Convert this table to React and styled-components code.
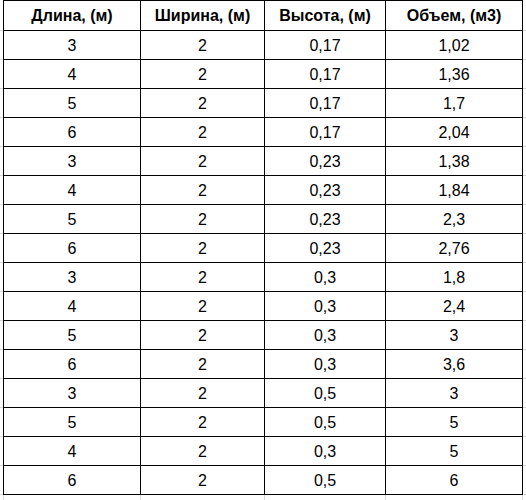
import React from 'react'
import styled, { createGlobalStyle } from 'styled-components'

const GlobalStyle = createGlobalStyle`
  html, body {
    margin: 0;
    padding: 0;
    background: #ffffff;
  }
  body {
    font-family: "Liberation Sans", Arial, sans-serif;
    color: #000000;
  }
`

const COLS = [138, 124, 121, 137]

const Sheet = styled.div`
  width: 526px;
  height: 500px;
  overflow: hidden;
  display: grid;
  grid-template-columns: 3px auto 1fr;
  grid-template-rows: auto 1fr;
`

const Gutter = styled.div`
  display: flex;
  flex-direction: column;
`

const GutterCell = styled.div`
  box-sizing: border-box;
  height: ${({ h }) => h}px;
  border-bottom: 1px solid #d9d9d9;
`

const Table = styled.div`
  display: flex;
  flex-direction: column;
  border-top: 1px solid #000;
`

const Row = styled.div`
  display: grid;
  grid-template-columns: ${COLS.map((w) => `${w}px`).join(' ')};
  height: ${({ head }) => (head ? 30 : 29)}px;
`

const Cell = styled.div`
  box-sizing: border-box;
  display: flex;
  align-items: center;
  justify-content: center;
  border-right: 1px solid #000;
  border-bottom: 1px solid #000;
  font-size: 16px;
  font-weight: ${({ head }) => (head ? 700 : 400)};
  padding-top: ${({ head }) => (head ? 0 : 1)}px;
  &:first-child {
    border-left: 1px solid #000;
  }
`

const Below = styled.div`
  grid-column: 2;
  display: grid;
  grid-template-columns: ${COLS.map((w) => `${w}px`).join(' ')};
`

const BelowCell = styled.div`
  box-sizing: border-box;
  border-right: 1px solid #d9d9d9;
  &:first-child {
    border-left: 1px solid #d9d9d9;
  }
`

const header = ['Длина, (м)', 'Ширина, (м)', 'Высота, (м)', 'Объем, (м3)']

const rows = [
  ['3', '2', '0,17', '1,02'],
  ['4', '2', '0,17', '1,36'],
  ['5', '2', '0,17', '1,7'],
  ['6', '2', '0,17', '2,04'],
  ['3', '2', '0,23', '1,38'],
  ['4', '2', '0,23', '1,84'],
  ['5', '2', '0,23', '2,3'],
  ['6', '2', '0,23', '2,76'],
  ['3', '2', '0,3', '1,8'],
  ['4', '2', '0,3', '2,4'],
  ['5', '2', '0,3', '3'],
  ['6', '2', '0,3', '3,6'],
  ['3', '2', '0,5', '3'],
  ['5', '2', '0,5', '5'],
  ['4', '2', '0,3', '5'],
  ['6', '2', '0,5', '6'],
]

const GutterColumn = () => (
  <Gutter>
    <GutterCell h={31} />
    {rows.map((_, i) => (
      <GutterCell key={i} h={29} />
    ))}
  </Gutter>
)

export default function App() {
  return (
    <>
      <GlobalStyle />
      <Sheet>
        <GutterColumn />
        <Table>
          <Row head>
            {header.map((h) => (
              <Cell head key={h}>{h}</Cell>
            ))}
          </Row>
          {rows.map((r, i) => (
            <Row key={i}>
              {r.map((v, j) => (
                <Cell key={j}>{v}</Cell>
              ))}
            </Row>
          ))}
        </Table>
        <GutterColumn />
        <Below>
          {COLS.map((w, i) => (
            <BelowCell key={i} />
          ))}
        </Below>
      </Sheet>
    </>
  )
}
